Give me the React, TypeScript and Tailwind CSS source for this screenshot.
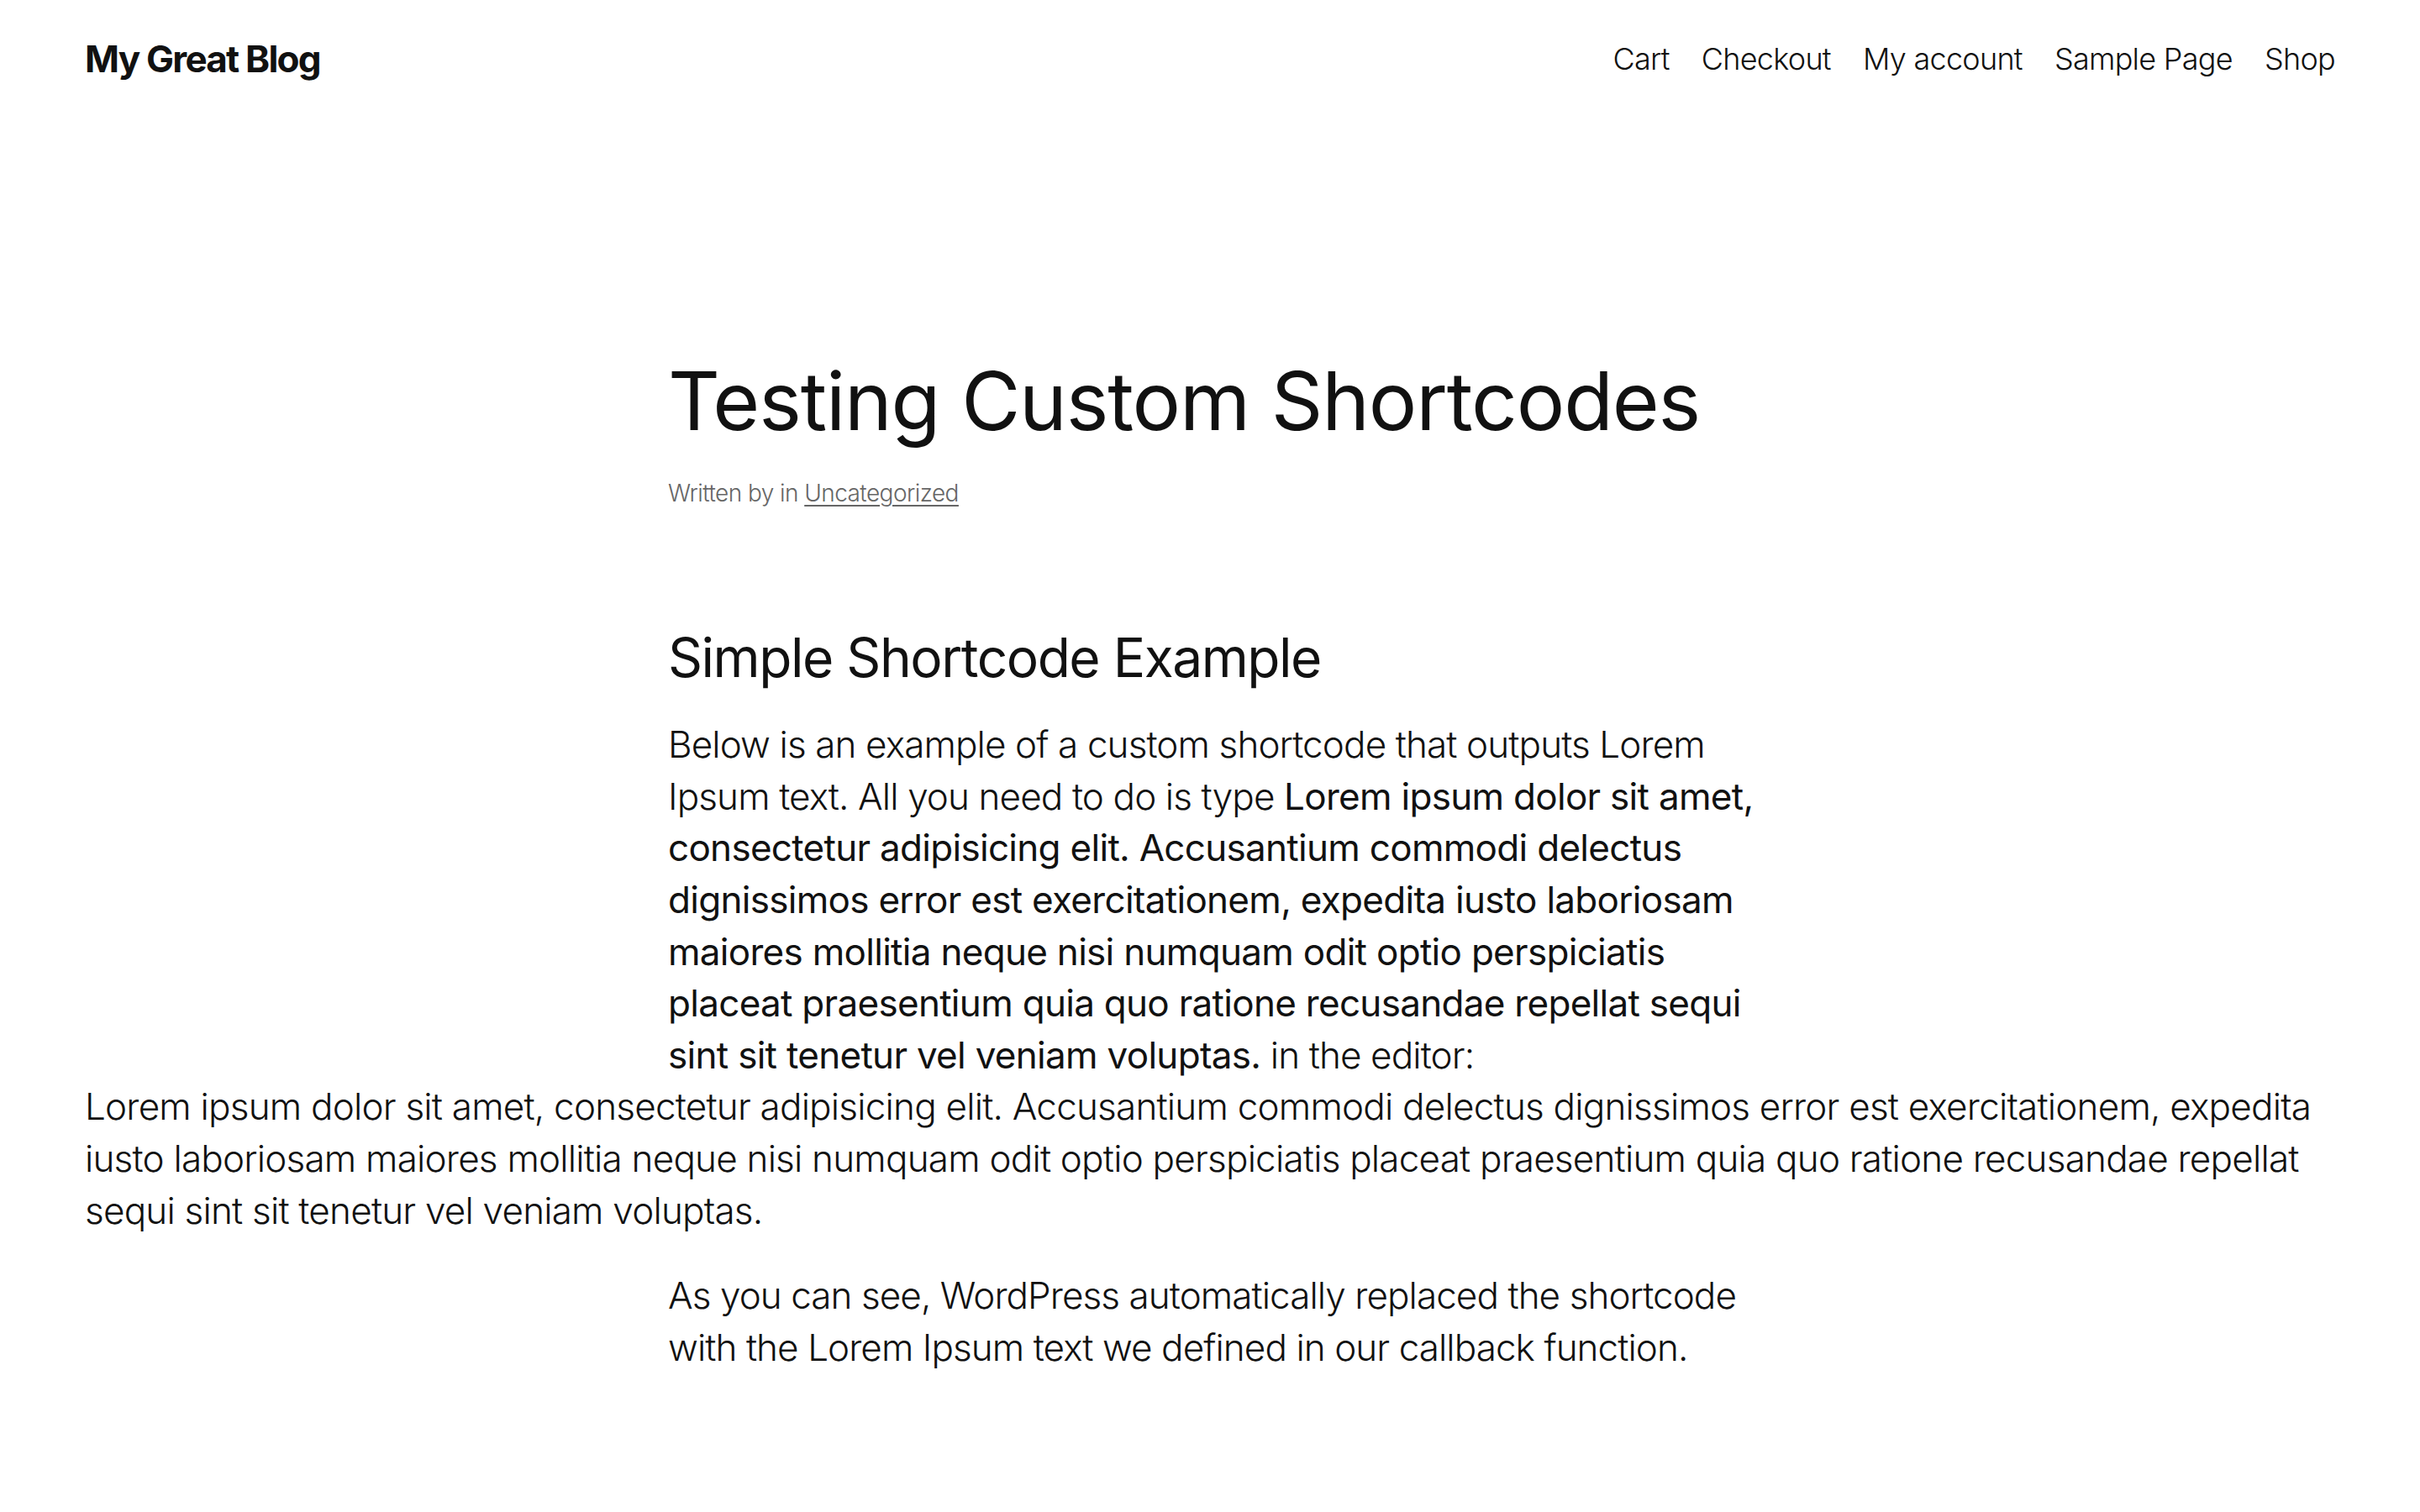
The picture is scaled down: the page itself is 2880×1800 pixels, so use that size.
import React from "react";

const font = "font-['Inter','Liberation_Sans',sans-serif]";

export default function App() {
  return (
    <div className={`min-h-screen bg-white text-[#111111] ${font}`}>
      <header className="flex h-[140px] items-center justify-between px-[101px]">
        <a className="text-[44px] font-bold tracking-[-0.04em] text-[#111111]">My Great Blog</a>
        <nav className="flex items-center gap-[38px] text-[36px] font-light tracking-[-0.02em]">
          <a>Cart</a>
          <a>Checkout</a>
          <a>My account</a>
          <a>Sample Page</a>
          <a>Shop</a>
        </nav>
      </header>

      <main className="pt-[280px] pb-[200px]">
        <div className="mx-auto w-[1290px]">
          <h1 className="text-[96px] font-normal leading-[1.2] tracking-[-0.012em]">Testing Custom Shortcodes</h1>
          <div className="mt-[33px] text-[28px] font-light leading-[1.4] tracking-[-0.02em] text-[#666666]">
            Written by in <a className="underline underline-offset-4">Uncategorized</a>
          </div>
        </div>

        <div className="mt-[138px] px-[101px] text-[44px] font-light leading-[1.4]">
          <div className="mx-auto w-[1290px]">
            <h2 className="text-[64px] font-normal leading-[1.2] tracking-[-0.023em]">Simple Shortcode Example</h2>
            <p className="mt-[34px] w-[1312px] tracking-[-0.02em]">
              Below is an example of a custom shortcode that outputs Lorem Ipsum text. All you need to do is type{" "}
              <strong className="font-normal tracking-[-0.016em]">
                Lorem ipsum dolor sit amet, consectetur adipisicing elit. Accusantium commodi delectus dignissimos error est exercitationem, expedita iusto laboriosam maiores mollitia neque nisi numquam odit optio perspiciatis placeat praesentium quia quo ratione recusandae repellat sequi sint sit tenetur vel veniam voluptas.
              </strong>{" "}
              in the editor:
            </p>
          </div>
          <div className="tracking-[-0.0178em]">
            Lorem ipsum dolor sit amet, consectetur adipisicing elit. Accusantium commodi delectus dignissimos error est exercitationem, expedita iusto laboriosam maiores mollitia neque nisi numquam odit optio perspiciatis placeat praesentium quia quo ratione recusandae repellat sequi sint sit tenetur vel veniam voluptas.
          </div>
          <div className="mx-auto mt-[40px] w-[1290px]">
            <p className="tracking-[-0.021em]">
              As you can see, WordPress automatically replaced the shortcode with the Lorem Ipsum text we defined in our callback function.
            </p>
          </div>
        </div>
      </main>
    </div>
  );
}
